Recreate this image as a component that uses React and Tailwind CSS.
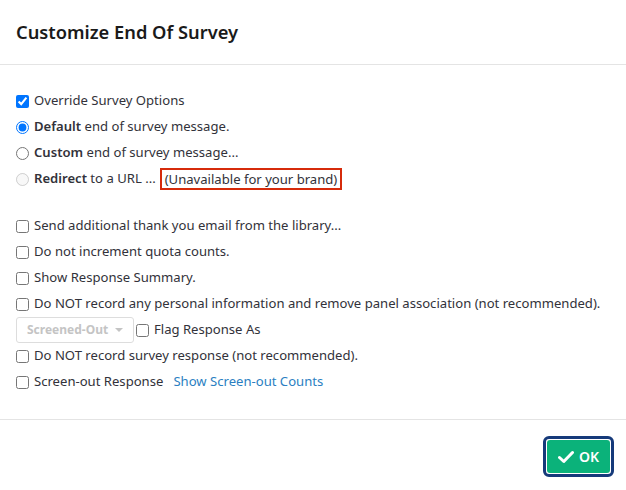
import React from 'react';

function Check({ checked = false, label, className = '' }) {
  return (
    <label className={`flex items-center h-[26px] whitespace-nowrap ${className}`}>
      <input type="checkbox" defaultChecked={checked} className="w-[13px] h-[13px] m-0 mr-[5px] accent-[#0075ff]" />
      <span>{label}</span>
    </label>
  );
}

function Radio({ checked = false, disabled = false, bold, rest }) {
  return (
    <label className="flex items-center h-[26px]">
      <input
        type="radio"
        name="eos"
        defaultChecked={checked}
        disabled={disabled}
        className="w-[13px] h-[13px] m-0 mr-[5px] accent-[#0075ff]"
      />
      <span>
        <b className="font-semibold">{bold}</b> {rest}
      </span>
    </label>
  );
}

export default function App() {
  return (
    <div
      className="w-[626px] h-[490px] bg-white text-[#32323a] text-[13.1px] overflow-hidden"
      style={{ fontFamily: '"Noto Sans", "Open Sans", sans-serif' }}
    >
      {/* Header */}
      <div className="h-[65px] border-b border-[#e4e4e4] flex items-center px-4">
        <h1 className="text-[18.3px] font-semibold text-[#1a1a1a]">Customize End Of Survey</h1>
      </div>

      {/* Body */}
      <div className="px-4 pt-[23px] h-[355px] border-b border-[#e4e4e4]">
        <Check checked label="Override Survey Options" />
        <Radio checked bold="Default" rest="end of survey message." />
        <Radio bold="Custom" rest="end of survey message..." />
        <div className="flex items-center h-[26px]">
          <input type="radio" name="eos" disabled className="w-[13px] h-[13px] m-0 mr-[5px]" />
          <span>
            <b className="font-semibold">Redirect</b> to a URL ...
          </span>
          <span className="ml-[4px] border-2 border-[#d62b0b] px-[3px] leading-[18px]">
            (Unavailable for your brand)
          </span>
        </div>

        <div className="mt-[21px]">
          <Check label="Send additional thank you email from the library..." />
          <Check label="Do not increment quota counts." />
          <Check label="Show Response Summary." />
          <Check label="Do NOT record any personal information and remove panel association (not recommended)." />
          <div className="flex items-center h-[26px]">
            <div className="w-[118px] h-[26px] border border-[#ddd] rounded-[3px] flex items-center justify-between px-[10px] mr-[2px]">
              <span className="text-[12px] font-bold text-[#c4c4c4]">Screened-Out</span>
              <span className="w-0 h-0 border-l-[4px] border-r-[4px] border-t-[4px] border-l-transparent border-r-transparent border-t-[#c4c4c4]" />
            </div>
            <Check label="Flag Response As" />
          </div>
          <Check label="Do NOT record survey response (not recommended)." />
          <div className="flex items-center h-[26px]">
            <Check label="Screen-out Response" />
            <a className="ml-[10px] text-[#2b7fc2]">Show Screen-out Counts</a>
          </div>
        </div>
      </div>

      {/* Footer */}
      <div className="flex justify-end pr-[12px] pt-[16px]">
        <button className="rounded-[6px] border-[3px] border-[#163a7a] p-[1px] bg-white">
          <span className="flex items-center gap-[5px] h-[33px] px-[11px] rounded-[3px] bg-[#0bb27a] text-white text-[14px] font-semibold">
            <svg width="16" height="14" viewBox="0 0 16 14">
              <path d="M1.5 7.5 L5.8 11.5 L14.5 2.5" fill="none" stroke="white" strokeWidth="3" strokeLinecap="round" strokeLinejoin="round" />
            </svg>
            OK
          </span>
        </button>
      </div>
    </div>
  );
}
